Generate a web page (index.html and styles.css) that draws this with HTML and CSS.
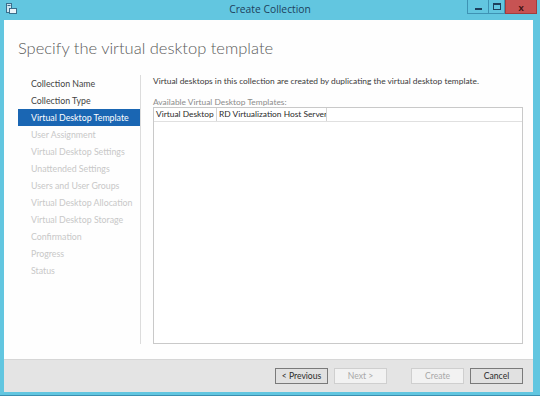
FILE: index.html
```html
<!DOCTYPE html>
<html lang="en">
<head>
    <meta charset="UTF-8">
    <title>Create Collection</title>
    <link rel="stylesheet" href="styles.css">
</head>
<body>
    <div class="window">

        <div class="titlebar">
            <svg class="app-icon" width="11" height="11" viewBox="0 0 11 11">
                <rect x="0.5" y="0.5" width="5" height="9" fill="#cfe6f2" stroke="#3a6e8c"/>
                <rect x="3.5" y="5.5" width="7" height="5" fill="#e9f3f9" stroke="#3a6e8c"/>
                <line x1="1.5" y1="2.5" x2="4.5" y2="2.5" stroke="#3a6e8c"/>
            </svg>
            <span class="title">Create Collection</span>
            <div class="controls">
                <div class="ctl ctl-min"><span></span></div>
                <div class="ctl ctl-max"><span></span></div>
                <div class="ctl ctl-close">x</div>
            </div>
        </div>

        <div class="client">
            <div class="page">
                <h1>Specify the virtual desktop template</h1>

                <div class="body">
                    <ul class="steps">
                        <li>Collection Name</li>
                        <li>Collection Type</li>
                        <li class="current">Virtual Desktop Template</li>
                        <li class="off">User Assignment</li>
                        <li class="off">Virtual Desktop Settings</li>
                        <li class="off">Unattended Settings</li>
                        <li class="off">Users and User Groups</li>
                        <li class="off">Virtual Desktop Allocation</li>
                        <li class="off">Virtual Desktop Storage</li>
                        <li class="off">Confirmation</li>
                        <li class="off">Progress</li>
                        <li class="off">Status</li>
                    </ul>

                    <div class="pane">
                        <p class="intro">Virtual desktops in this collection are created by duplicating the virtual desktop template.</p>
                        <div class="list-label">Available Virtual Desktop Templates:</div>
                        <div class="list">
                            <div class="list-head">
                                <div class="col col-vd">Virtual Desktop</div>
                                <div class="col col-host">RD Virtualization Host Server</div>
                                <div class="col col-fill"></div>
                            </div>
                        </div>
                    </div>
                </div>
            </div>

            <div class="footer">
                <button class="btn">&lt; Previous</button>
                <button class="btn" disabled>Next &gt;</button>
                <button class="btn btn-gap" disabled>Create</button>
                <button class="btn">Cancel</button>
            </div>
        </div>
    </div>
</body>
</html>
```

FILE: styles.css
```css
body {
    margin: 0;
    font-family: 'Lato', 'Open Sans', sans-serif;
    background-color: #62c6e0;
}

.window {
    width: 540px;
    height: 396px;
    background-color: #62c6e0;
    border-bottom: 1px solid #3c8fb0;
    box-sizing: border-box;
    display: flex;
    flex-direction: column;
}

.titlebar {
    height: 20px;
    display: flex;
    align-items: flex-start;
    position: relative;
}

.app-icon {
    margin: 3px 0 0 6px;
}

.title {
    position: absolute;
    left: 0;
    right: 0;
    top: 2px;
    text-align: center;
    font-family: 'Open Sans', sans-serif;
    font-size: 10.3px;
    color: #1d3f5c;
}

.controls {
    margin-left: auto;
    margin-right: 3px;
    display: flex;
    position: relative;
}

.ctl {
    height: 14px;
    border: 1px solid #3e93b4;
    border-top: none;
    box-sizing: border-box;
    display: flex;
    align-items: center;
    justify-content: center;
}

.ctl-min {
    width: 21px;
    border-right: none;
}

.ctl-min span {
    width: 7px;
    height: 2px;
    margin-top: 4px;
    background-color: #1d3f5c;
}

.ctl-max {
    width: 17px;
}

.ctl-max span {
    width: 6px;
    height: 4px;
    border: 1px solid #1d3f5c;
    border-top-width: 2px;
}

.ctl-close {
    width: 32px;
    background-color: #c75353;
    border-color: #a33c3c;
    color: #3a1010;
    font-size: 10px;
    font-weight: 700;
    line-height: 12px;
}

.client {
    flex: 1;
    margin: 0 7px 3px 4px;
    display: flex;
    flex-direction: column;
}

.page {
    flex: 1;
    background-color: #fefefe;
    display: flex;
    flex-direction: column;
}

h1 {
    margin: 18px 0 0 14px;
    height: 35px;
    font-size: 16.5px;
    font-weight: 300;
    color: #5a5a5a;
}

.body {
    flex: 1;
    display: flex;
    margin-bottom: 15px;
}

.steps {
    list-style: none;
    margin: 2px 0 0 14px;
    padding: 0;
    width: 122px;
    flex-shrink: 0;
    border-right: 1px solid #dcdcdc;
}

.steps li {
    height: 17px;
    line-height: 17px;
    padding-left: 13px;
    font-size: 8.8px;
    color: #444444;
    white-space: nowrap;
}

.steps li.current {
    background-color: #1a66b3;
    color: #ffffff;
}

.steps li.off {
    color: #c8c8c8;
}

.pane {
    flex: 1;
    padding: 0 10px 0 12px;
    display: flex;
    flex-direction: column;
}

.intro {
    margin: 2px 0 0 0;
    font-size: 8.4px;
    color: #3a3a3a;
    line-height: 13px;
    white-space: nowrap;
}

.list-label {
    margin-top: 9px;
    font-size: 8.4px;
    line-height: 10px;
    color: #8c8c8c;
}

.list {
    flex: 1;
    border: 1px solid #c9c9c9;
    background-color: #ffffff;
}

.list-head {
    display: flex;
    height: 13px;
    border-bottom: 1px solid #e0e0e0;
}

.col {
    font-size: 8.4px;
    line-height: 13px;
    color: #2a2a2a;
    padding: 0 2px;
    border-right: 1px solid #d4d4d4;
    white-space: nowrap;
    overflow: hidden;
    box-sizing: border-box;
}

.col-vd {
    width: 63px;
}

.col-host {
    width: 110px;
}

.col-fill {
    flex: 1;
    border-right: none;
}

.footer {
    height: 32px;
    background-color: #e4e4e4;
    border-top: 1px solid #d6d6d6;
    display: flex;
    align-items: center;
    justify-content: flex-end;
    padding-right: 10px;
    gap: 6px;
}

.btn {
    width: 53px;
    height: 16px;
    padding: 0;
    font-family: inherit;
    font-size: 8.6px;
    color: #2a2a2a;
    background-color: #e1e1e1;
    border: 1px solid #7a7a7a;
    border-radius: 0;
}

.btn:disabled {
    color: #a8a8a8;
    background-color: #f2f2f2;
    border-color: #cfcfcf;
}

.btn-gap {
    margin-left: 18px;
}
```
